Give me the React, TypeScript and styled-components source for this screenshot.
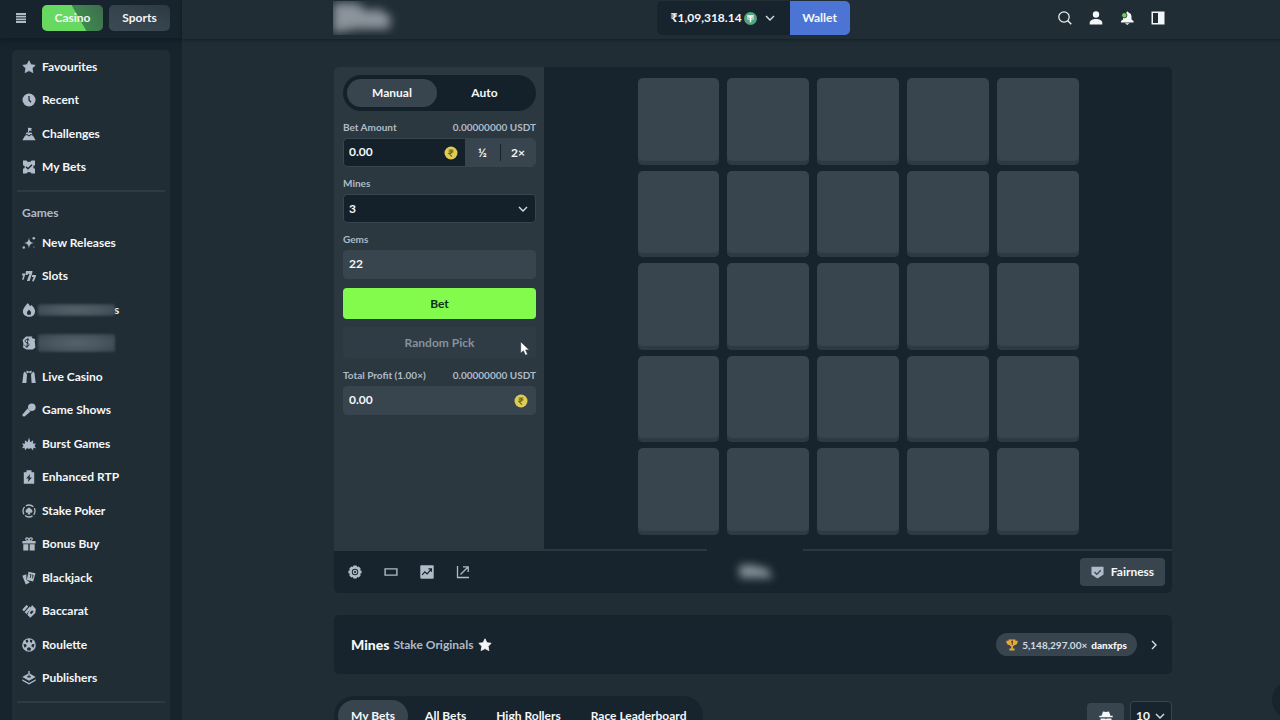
import React from 'react';
import styled, { createGlobalStyle, css } from 'styled-components';

const color = {
  page: '#202d35',
  deep: '#17242d',
  field: '#14212a',
  panel: '#2b3840',
  raised: '#38454f',
  muted: '#afbbc8',
  text: '#f4f7f9',
  green: '#82fb4c',
  blue: '#4c74d4',
};

const Global = createGlobalStyle`
  *, *::before, *::after { box-sizing: border-box; }
  body {
    margin: 0;
    background: ${color.page};
    color: ${color.text};
    font-family: Lato, "Noto Sans", sans-serif;
    font-size: 12px;
    line-height: 16px;
    font-weight: 700;
  }
  button, input, select { font: inherit; color: inherit; border: 0; margin: 0; padding: 0; background: none; }
  button { cursor: pointer; }
  a { color: inherit; text-decoration: none; }
  svg { display: block; flex: none; }
`;

const Shell = styled.div`
  display: flex;
  height: 100vh;
  overflow: hidden;
`;

/* ---------- sidebar ---------- */

const Sidebar = styled.aside`
  display: flex;
  flex-direction: column;
  flex: none;
  width: 182px;
  background: ${color.deep};
`;

const SideHeader = styled.div`
  display: flex;
  align-items: center;
  flex: none;
  gap: 6px;
  height: 38px;
  padding: 0 12px 3px 14px;
  box-shadow: 0 2px 6px rgba(8, 18, 25, 0.5);
`;

const MenuButton = styled.button`
  display: grid;
  place-items: center;
  width: 14px;
  height: 24px;
  margin-right: 8px;
  color: ${color.muted};
`;

const ModeLink = styled.a<{ $active?: boolean }>`
  flex: 1;
  height: 26px;
  border-radius: 5px;
  line-height: 25px;
  text-align: center;
  background: ${(p) =>
    p.$active
      ? 'linear-gradient(60deg, #67d860 0 58%, #3d8a4d 59%, #3f6b4f 100%)'
      : 'linear-gradient(20deg, #3c4a55 0%, #34424c 60%, #2c3942 100%)'};
`;

const SidePanel = styled.nav`
  flex: 1;
  margin: 12px 12px 0;
  overflow: hidden;
  border-radius: 5px 5px 0 0;
  background: ${color.page};
`;

const NavList = styled.ul<{ $height: number }>`
  display: grid;
  grid-auto-rows: 1fr;
  height: ${(p) => p.$height}px;
  margin: 0;
  padding: 0 10px;
  list-style: none;
`;

const NavLink = styled.a`
  display: flex;
  align-items: center;
  gap: 6px;
  height: 100%;
  svg { color: ${color.muted}; }
`;

const SideRule = styled.hr`
  height: 2px;
  margin: 6px 5px 13px;
  border: 0;
  background: #2d3b44;
`;

const SideHeading = styled.h2`
  margin: 0 10px 5px;
  font-size: 12px;
  line-height: 16px;
  color: ${color.muted};
`;

const Redacted = styled.span<{ $tall?: boolean }>`
  display: block;
  width: 77px;
  height: ${(p) => (p.$tall ? 18 : 12)}px;
  margin-left: -4px;
  border-radius: 2px;
  background: radial-gradient(ellipse at 50% 50%, #56616a 0%, #4a565f 50%, #35424b 100%);
  filter: blur(1px);
  & + span { margin-left: -7px; }
`;

/* ---------- top bar ---------- */

const Main = styled.main`
  display: flex;
  flex: 1;
  flex-direction: column;
  min-width: 0;
  background: ${color.page};
`;

const TopBar = styled.header`
  display: grid;
  grid-template-columns: 1fr auto 1fr;
  align-items: center;
  flex: none;
  height: 39px;
  padding: 0 107px 3px 151px;
  box-shadow: 0 1px 3px rgba(8, 18, 25, 0.55);
`;

const BlurredLogo = styled.div`
  width: 68px;
  height: 34px;
  overflow: hidden;
  svg { filter: blur(5px); }
`;

const Balance = styled.div`
  display: flex;
  height: 34px;
  border-radius: 5px;
  overflow: hidden;
  background: ${color.deep};
`;

const BalanceButton = styled.button`
  display: flex;
  align-items: center;
  justify-content: space-between;
  width: 133px;
  padding: 0 15px 0 14px;
`;

const Amount = styled.span`
  display: flex;
  align-items: center;
  gap: 2px;
`;

const WalletButton = styled.button`
  width: 60px;
  background: ${color.blue};
`;

const TopActions = styled.div`
  display: flex;
  justify-content: flex-end;
  gap: 15px;
  padding-right: 7px;
`;

const IconButton = styled.button`
  display: grid;
  place-items: center;
  width: 16px;
  height: 24px;
`;

/* ---------- game card ---------- */

const Content = styled.div`
  display: flex;
  flex: 1;
  flex-direction: column;
  gap: 22px;
  min-height: 0;
  padding: 28px 108px 0 152px;
  overflow-y: auto;
  scrollbar-width: none;
`;

const Game = styled.section`
  flex: none;
  overflow: hidden;
  border-radius: 5px;
  background: ${color.deep};
`;

const GameBody = styled.div`
  display: grid;
  grid-template-columns: 210px 1fr;
`;

const Controls = styled.form`
  display: flex;
  flex-direction: column;
  gap: 8px;
  padding: 8px 8px 0 9px;
  background: ${color.panel};
`;

const ModeTabs = styled.div`
  display: grid;
  grid-template-columns: 90px 1fr;
  height: 36px;
  padding: 4px;
  border-radius: 18px;
  background: ${color.field};
`;

const PillTab = styled.button<{ $active?: boolean; $padded?: boolean }>`
  border-radius: 16px;
  background: ${(p) => (p.$active ? color.raised : 'transparent')};
  ${(p) => p.$padded && css`padding: 0 13px; white-space: nowrap;`}
`;

const Field = styled.div`
  display: flex;
  flex-direction: column;
  gap: 3px;
`;

const LabelRow = styled.div`
  display: flex;
  justify-content: space-between;
  font-size: 10px;
  line-height: 16px;
  color: ${color.muted};
  white-space: nowrap;
`;

const InputBox = styled.div<{ $plain?: boolean }>`
  position: relative;
  display: flex;
  height: 29px;
  overflow: hidden;
  border: 1px solid ${color.raised};
  border-radius: 4px;
  background: ${(p) => (p.$plain ? color.raised : color.field)};
`;

const TextInput = styled.input`
  flex: 1;
  min-width: 0;
  padding: 0 5px 1px;
  outline: none;
`;

const CoinSlot = styled.span`
  display: grid;
  place-items: center;
  width: 28px;
`;

const Multipliers = styled.div`
  display: grid;
  grid-template-columns: 1fr 1fr;
  width: 70px;
  padding: 5px 0;
  background: ${color.raised};
  button + button { border-left: 1px solid ${color.deep}; }
`;

const SelectInput = styled.select`
  flex: 1;
  padding: 0 5px;
  appearance: none;
  outline: none;
`;

const SelectArrow = styled.span<{ $right: number }>`
  position: absolute;
  top: 50%;
  right: ${(p) => p.$right}px;
  transform: translateY(-50%);
  pointer-events: none;
`;

const Actions = styled.div`
  display: flex;
  flex-direction: column;
  gap: 8px;
  margin: 1px 0;
`;

const BetButton = styled.button`
  height: 31px;
  border-radius: 4px;
  background: ${color.green};
  color: #10301c;
`;

const RandomButton = styled.button`
  position: relative;
  height: 31px;
  border-radius: 4px;
  background: #2f3c45;
  color: #86929c;
`;

const Pointer = styled.span`
  position: absolute;
  top: 14px;
  right: 6px;
`;

const Board = styled.div`
  display: grid;
  grid-template-columns: repeat(5, 1fr);
  gap: 6px 8px;
  width: 441px;
  height: 457px;
  margin: 11px auto 14px;
`;

const Tile = styled.button`
  border-radius: 5px;
  background: ${color.raised};
  box-shadow: inset 0 -5px 1px -1px #2d3a43;
`;

const GameRule = styled.div`
  height: 2px;
  background: linear-gradient(
    90deg,
    ${color.panel} calc(50% - 46px),
    transparent calc(50% - 46px) calc(50% + 50px),
    ${color.panel} calc(50% + 50px)
  );
`;

const GameFooter = styled.footer`
  display: grid;
  grid-template-columns: 1fr auto 1fr;
  align-items: center;
  height: 42px;
  padding: 0 7px 0 13px;
`;

const BlurredMark = styled.svg`
  filter: blur(4px);
`;

const Tools = styled.div`
  display: flex;
  gap: 20px;
  color: ${color.muted};
`;

const FairnessButton = styled.button`
  display: flex;
  align-items: center;
  justify-content: center;
  justify-self: end;
  gap: 7px;
  width: 85px;
  height: 28px;
  border-radius: 4px;
  background: ${color.raised};
`;

/* ---------- title card and bets ---------- */

const TitleCard = styled.section`
  display: flex;
  align-items: center;
  justify-content: space-between;
  flex: none;
  height: 59px;
  padding: 0 10px 0 17px;
  border-radius: 5px;
  background: ${color.deep};
`;

const TitleGroup = styled.div`
  display: flex;
  align-items: center;
  gap: 4px;
`;

const Title = styled.h1`
  margin: 0;
  font-size: 14px;
  line-height: 20px;
  font-weight: 900;
`;

const Studio = styled.a`
  color: ${color.muted};
`;

const RecordGroup = styled.div`
  display: flex;
  align-items: center;
  gap: 9px;
`;

const Record = styled.button`
  display: flex;
  align-items: center;
  justify-content: center;
  gap: 4px;
  width: 141px;
  height: 23px;
  border-radius: 12px;
  background: ${color.raised};
  font-size: 10px;
  color: #d3dbe2;
  strong { font-weight: 900; color: ${color.text}; }
`;

const BetsBar = styled.section`
  display: flex;
  justify-content: space-between;
  flex: none;
`;

const BetTabs = styled.div`
  display: flex;
  gap: 4px;
  height: 40px;
  padding: 4px;
  border-radius: 20px;
  background: ${color.deep};
`;

const BetTools = styled.div`
  display: flex;
  align-items: flex-start;
  gap: 6px;
  padding-top: 5px;
`;

const GhostButton = styled.button`
  display: grid;
  place-items: center;
  width: 37px;
  height: 28px;
  margin-top: 2px;
  border-radius: 4px;
  background: ${color.raised};
`;

const PageSize = styled(InputBox)`
  width: 42px;
  height: 29px;
  background: ${color.deep};
`;

const ChatBubble = styled.button`
  position: fixed;
  right: -32px;
  bottom: 0;
  width: 40px;
  height: 40px;
  border-radius: 50%;
  background: ${color.deep};
`;

/* ---------- drawings ---------- */

const Svg = ({ size = 14, box = 14, children }: { size?: number; box?: number; children: React.ReactNode }) => (
  <svg width={size} height={size} viewBox={`0 0 ${box} ${box}`} fill="currentColor" aria-hidden="true">
    {children}
  </svg>
);

const starPath = 'M7 .8l1.900 3.900 4.300.6-3.100 3 .8 4.300L7 10.600l-3.900 2 .8-4.300-3.100-3 4.300-.6z';
const hole = color.page;

const icons: Record<string, React.ReactNode> = {
  star: <path d={starPath} stroke="currentColor" strokeWidth="0.8" strokeLinejoin="round" />,
  clock: (
    <>
      <circle cx="7" cy="7" r="6.500" />
      <path d="M7 3v4l2 2.200" fill="none" stroke={hole} strokeWidth="1.300" />
    </>
  ),
  summit: (
    <>
      <path d="M6 .8h1l3 .4-1 1.300 1 1.300H7v1.400H6z" />
      <path d="M4.500 5.500h5l1 2.200-1.700-.6L7 8.300l-1.800-1.200-1.700.6z" />
      <path d="M3 8.700l2-.6 2 1.400 2-1.400 2 .6 2.600 4.500H.4z" />
    </>
  ),
  ticket: (
    <>
      <path d="M1 .5h3.500a2.500 1.500 0 005 0H13v4.700a1.800 1.800 0 000 3.600v4.700H9.500a2.500 1.500 0 00-5 0H1V8.800a1.800 1.800 0 000-3.600z" />
      <path d="M4 6.800l2 2 4-4" fill="none" stroke={hole} strokeWidth="1.400" />
    </>
  ),
  sparkle: (
    <>
      <path d="M7 1.500c.5 3.800 1.500 5 5 5.500-3.500.5-4.500 1.700-5 5.500C6.500 8.700 5.500 7.500 2 7c3.500-.5 4.500-1.700 5-5.500z" />
      <circle cx="11.800" cy="2.300" r="1.300" />
      <circle cx="1.800" cy="11.500" r="1.200" />
      <circle cx="12" cy="11" r=".6" />
    </>
  ),
  slots: (
    <>
      <path d="M4 2h6.500l-.3 2.200L7.600 12H4.900l2.600-7.300H6L5.500 6H3.400z" />
      <path d="M0 4.500h3.300l-.4 2-1.300 4.200H0l1.300-4.200H.2zM10.200 6H14l-.3 2-1.900 4.200H10L11.600 8h-1.700z" />
    </>
  ),
  flame: (
    <>
      <path d="M5.500.3c1.300.8 2 1.600 2.500 2.900l1.500-1.100c2 1.900 3.600 4.100 3.600 6.500A5.500 5.500 0 017.300 13.800C3.500 13.800.9 11.500.9 8.300c0-3 2.500-5 4.600-8z" />
      <path d="M7 6.800c1.200 1 2.100 2 2.100 3.100A2 2 0 017 12a2 2 0 01-2.100-2.100C4.900 8.800 6 7.900 7 6.800z" fill={hole} />
    </>
  ),
  stakeChip: (
    <>
      <path d="M4 .6h6.500l-1 1.400 3.700 1-.5 2 .7 6.500-2.600 2H4.500L1 11.500 1.500 8 .6 4z" />
      <path d="M7.300 4.300C6.500 3 3 3 3 5c0 2.200 4 1.500 4 3.800 0 2-3.600 2.200-4.600.4M6 1.800L4.900 12" fill="none" stroke={hole} strokeWidth=".9" />
    </>
  ),
  tuxedo: (
    <>
      <path d="M2.800 1.500L5 4.500 4.400 13H.3L1.500 3zM11.200 1.500L9 4.500l.6 8.500h4.100L12.500 3z" />
      <path d="M4.500.4L7 1.500 9.500.4v3L7 2.500l-2.500.9z" />
    </>
  ),
  microphone: (
    <>
      <circle cx="9.800" cy="4.200" r="3.800" />
      <path d="M5.500 5.500l3 3-5.900 4.900-2-.1-.1-1.900z" />
    </>
  ),
  burst: (
    <path d="M7 .5l1.400 4.800 2.700-2v3.500l2.900-.4-1.500 2.400L14 11.200l-2.500-.4-.6 2.500-2-2.300L7 12l-1.900-1-2 2.300-.6-2.500-2.500.4 1.500-2.400L0 6.400l2.900.4V3.300l2.700 2z" />
  ),
  battery: (
    <>
      <path d="M4.500.3h5v1.900h2.700v11.500H1.800V2.200h2.700z" />
      <path d="M8 4L4.200 8.500h2.300L6 12l3.900-4.600H7.500z" fill={hole} />
    </>
  ),
  pokerChip: (
    <>
      <circle cx="7" cy="7" r="6" fill="none" stroke="currentColor" strokeWidth="1.300" strokeDasharray="7.900 1.525" strokeDashoffset="3.950" />
      <path d="M7 3.200c1 1.300 3.500 2.200 3.500 4 0 1.600-1.800 2-2.700 1.200l.6 2.200H5.600l.6-2.200c-.9.800-2.700.4-2.700-1.200 0-1.800 2.500-2.700 3.500-4z" />
    </>
  ),
  gift: (
    <>
      <path d="M.4 4h13.200v2.500H.4zM1.300 7.300h5v6.200h-5zM7.700 7.300h5v6.200h-5z" />
      <path d="M7 4C3 4 3 .8 5 .8c1.300 0 2 1.700 2 3.200C7 2.500 7.700.8 9 .8c2 0 2 3.200-2 3.200z" fill="none" stroke="currentColor" strokeWidth="1.200" />
    </>
  ),
  cards: (
    <>
      <path d="M.3 4.800l4-1.500.2 5.500 3.300 2.700-4 2z" />
      <path d="M6.500.8l7 1.500-2.400 8.300-6.300-1.500z" />
      <path d="M7.600 3.400L9 3.700l-.8 3.200M10 4l1.200.3-.9 3" fill="none" stroke={hole} strokeWidth=".9" />
    </>
  ),
  baccarat: (
    <>
      <path d="M.3 5.500L4.500.9l1.800 1.500L1.900 7.500zM2.700 8.300l5-5.800 1.700 1.400-5 6z" />
      <path d="M10 1l3.800 4-.5 4-5 4.700-3-2.900z" />
      <path d="M7.800 8.800l2.200-2.500 1.500 1.500-2.300 2.400z" fill={hole} />
    </>
  ),
  roulette: (
    <>
      <circle cx="7" cy="7" r="6.800" />
      <g fill={hole}>
        <path d="M3.500 2.200l2.300-.7.600 2.200-1.800 1.200zM10.500 2.200l-2.300-.7-.3 2.200 1.700 1.300z" />
        <path d="M1.500 6l2.600.3.600 2L2.400 9.800zM12.500 6l-2.600.3-.6 2 2.300 1.500z" />
        <path d="M7 9.300l1.900.8-.2 2.400H5.300l-.2-2.400z" />
      </g>
    </>
  ),
  publisher: (
    <>
      <path d="M6.300 0h1.400v2.500l6 3.500L7 9.800.3 6l6-3.500z" />
      <path d="M.3 8.200L7 12l6.700-3.800v1.600L7 13.600.3 9.800z" />
      <path d="M7 3.500v3.200M5 5.800h4" fill="none" stroke={hole} strokeWidth="1" />
    </>
  ),
};

const Chevron = ({ dir = 'down' }: { dir?: 'down' | 'right' }) => (
  <Svg size={10} box={10}>
    <path
      d={dir === 'down' ? 'M1 3l4 4 4-4' : 'M3 1l4 4-4 4'}
      fill="none"
      stroke="#d6dee5"
      strokeWidth="1.400"
    />
  </Svg>
);

const RupeeCoin = () => (
  <Svg size={14}>
    <circle cx="7" cy="7" r="6.500" fill="#e0cc55" />
    <path d="M4.600 4h4.800M4.600 5.900h4.800M5 4c3.900 0 3.900 3.600 0 3.600l3 3" fill="none" stroke="#626d1c" strokeWidth="1.100" />
  </Svg>
);

const TetherCoin = () => (
  <Svg size={13}>
    <circle cx="7" cy="7" r="7" fill="#55a381" />
    <path d="M3.500 4.300h7M7 4v7" fill="none" stroke="#fff" strokeWidth="1.600" />
    <ellipse cx="7" cy="6.900" rx="3.800" ry="1" fill="none" stroke="#fff" strokeWidth=".8" />
  </Svg>
);

/* ---------- data ---------- */

const personal = [
  ['star', 'Favourites'],
  ['clock', 'Recent'],
  ['summit', 'Challenges'],
  ['ticket', 'My Bets'],
];

const games: [string, React.ReactNode][] = [
  ['sparkle', 'New Releases'],
  ['slots', 'Slots'],
  ['flame', <><Redacted /><span>s</span></>],
  ['stakeChip', <Redacted $tall />],
  ['tuxedo', 'Live Casino'],
  ['microphone', 'Game Shows'],
  ['burst', 'Burst Games'],
  ['battery', 'Enhanced RTP'],
  ['pokerChip', 'Stake Poker'],
  ['gift', 'Bonus Buy'],
  ['cards', 'Blackjack'],
  ['baccarat', 'Baccarat'],
  ['roulette', 'Roulette'],
  ['publisher', 'Publishers'],
];

const NavItem = ({ icon, children }: { icon: string; children: React.ReactNode }) => (
  <li>
    <NavLink href="#">
      <Svg>{icons[icon]}</Svg>
      {children}
    </NavLink>
  </li>
);

export default function App() {
  return (
    <>
      <Global />
      <Shell>
        <Sidebar>
          <SideHeader>
            <MenuButton aria-label="Menu">
              <Svg size={12} box={12}>
                <path d="M1 1h10v1.900H1zM1 3.700h10v1.900H1zM1 6.400h10v1.900H1zM1 9.100h10V11H1z" />
              </Svg>
            </MenuButton>
            <ModeLink href="#" $active>Casino</ModeLink>
            <ModeLink href="#">Sports</ModeLink>
          </SideHeader>
          <SidePanel>
            <NavList $height={134}>
              {personal.map(([icon, label]) => <NavItem key={icon} icon={icon}>{label}</NavItem>)}
            </NavList>
            <SideRule />
            <SideHeading>Games</SideHeading>
            <NavList $height={469}>
              {games.map(([icon, label]) => <NavItem key={icon} icon={icon}>{label}</NavItem>)}
            </NavList>
            <SideRule />
          </SidePanel>
        </Sidebar>

        <Main>
          <TopBar>
            <BlurredLogo>
              <svg width="68" height="34" viewBox="0 0 68 34" aria-hidden="true">
                <path d="M0 2h24l10 8 12-2 12 8-2 12H36l-12 0-24 4z" fill="#8b939b" />
              </svg>
            </BlurredLogo>
            <Balance>
              <BalanceButton>
                <Amount>₹1,09,318.14 <TetherCoin /></Amount>
                <Chevron />
              </BalanceButton>
              <WalletButton>Wallet</WalletButton>
            </Balance>
            <TopActions>
              <IconButton aria-label="Search">
                <Svg>
                  <circle cx="6" cy="6" r="5.200" fill="none" stroke="currentColor" strokeWidth="1.200" />
                  <path d="M9.800 9.800l3.500 3.500" stroke="currentColor" strokeWidth="1.300" />
                </Svg>
              </IconButton>
              <IconButton aria-label="Account">
                <Svg>
                  <circle cx="7" cy="3.500" r="3.200" />
                  <path d="M.7 13.500v-1.500c0-5.300 12.600-5.300 12.600 0v1.500z" />
                </Svg>
              </IconButton>
              <IconButton aria-label="Notifications">
                <Svg>
                  <path d="M7.500.3l1 1.200c2 .6 3 2.200 3 4.500v2.500l2 1.500v1.500H1V10l2-1.500V6c0-2.300 1.500-3.900 3.500-4.500zM5 12.300h4.500L7.200 14z" />
                  <circle cx="4.300" cy="4.300" r="2.600" fill="#69d84b" stroke={color.page} strokeWidth=".8" />
                </Svg>
              </IconButton>
              <IconButton aria-label="Side panel">
                <Svg>
                  <path d="M.5.5h13v13H.5zM2 2v10h5V2z" fillRule="evenodd" />
                </Svg>
              </IconButton>
            </TopActions>
          </TopBar>

          <Content>
            <Game>
              <GameBody>
                <Controls onSubmit={(e) => e.preventDefault()}>
                  <ModeTabs>
                    <PillTab type="button" $active>Manual</PillTab>
                    <PillTab type="button">Auto</PillTab>
                  </ModeTabs>
                  <Field>
                    <LabelRow><label htmlFor="bet">Bet Amount</label><span>0.00000000 USDT</span></LabelRow>
                    <InputBox>
                      <TextInput id="bet" defaultValue="0.00" />
                      <CoinSlot><RupeeCoin /></CoinSlot>
                      <Multipliers>
                        <button type="button">½</button>
                        <button type="button">2×</button>
                      </Multipliers>
                    </InputBox>
                  </Field>
                  <Field>
                    <LabelRow><label htmlFor="mines">Mines</label></LabelRow>
                    <InputBox>
                      <SelectInput id="mines" defaultValue="3">
                        <option>3</option>
                        <option>5</option>
                      </SelectInput>
                      <SelectArrow $right={7}><Chevron /></SelectArrow>
                    </InputBox>
                  </Field>
                  <Field>
                    <LabelRow><label htmlFor="gems">Gems</label></LabelRow>
                    <InputBox $plain><TextInput id="gems" value="22" readOnly /></InputBox>
                  </Field>
                  <Actions>
                    <BetButton type="submit">Bet</BetButton>
                    <RandomButton type="button" disabled>
                      Random Pick
                      <Pointer>
                        <svg width="10" height="15" viewBox="0 0 10 15" aria-hidden="true">
                          <path d="M.7.700v11.600l2.700-2.500 2 4.500 2.200-1-2-4.400h3.700z" fill="#fff" stroke="#27323a" strokeWidth=".6" />
                        </svg>
                      </Pointer>
                    </RandomButton>
                  </Actions>
                  <Field>
                    <LabelRow><label htmlFor="profit">Total Profit (1.00×)</label><span>0.00000000 USDT</span></LabelRow>
                    <InputBox $plain>
                      <TextInput id="profit" value="0.00" readOnly />
                      <CoinSlot><RupeeCoin /></CoinSlot>
                    </InputBox>
                  </Field>
                </Controls>
                <Board>
                  {Array.from({ length: 25 }, (_, i) => <Tile key={i} aria-label={`Tile ${i + 1}`} />)}
                </Board>
              </GameBody>
              <GameRule />
              <GameFooter>
                <Tools>
                  <IconButton aria-label="Settings">
                    <Svg>
                      <path fillRule="evenodd" d="M5.300.5h3.400l.4 1.500 1.600-.5 2 2-.6 1.700 1.500.5v2.600l-1.500.5.6 1.700-2 2-1.600-.5-.4 1.500H5.300L4.900 12l-1.600.5-2-2 .6-1.700-1.500-.5V5.700l1.500-.5-.6-1.700 2-2 1.600.5zM7 3.800a3.200 3.200 0 100 6.400 3.200 3.200 0 000-6.400z" />
                      <circle cx="7" cy="7" r="1.700" fill="none" stroke="currentColor" strokeWidth="1.200" />
                    </Svg>
                  </IconButton>
                  <IconButton aria-label="Theatre mode">
                    <Svg><path d="M.4 3.200h13.200v7.600H.4zM1.800 4.600v4.800h10.400V4.600z" fillRule="evenodd" /></Svg>
                  </IconButton>
                  <IconButton aria-label="Live stats">
                    <Svg>
                      <rect x=".3" y=".3" width="13.400" height="13.400" rx="1" />
                      <path d="M2.200 9.800l2.600-3 2.300 2.100 4-4.600M8.400 3.800h3v3" fill="none" stroke={color.deep} strokeWidth="1.200" />
                    </Svg>
                  </IconButton>
                  <IconButton aria-label="Open in window">
                    <Svg><path d="M1.500 1v11.500H13M4.500 9.500l7.300-7.300M7 1.800h5.200V7" fill="none" stroke="currentColor" strokeWidth="1.300" /></Svg>
                  </IconButton>
                </Tools>
                <BlurredMark width="46" height="24" viewBox="0 0 46 24" aria-hidden="true">
                  <path d="M6 5h16l4 2 8 1 6 10H7z" fill="#848e96" />
                </BlurredMark>
                <FairnessButton>
                  <Svg size={13}>
                    <path d="M.5.800h13v8.400L7 13.500.5 9.200z" fill={color.muted} />
                    <path d="M3.800 6.500L6.200 9l4.300-4.500" fill="none" stroke={color.raised} strokeWidth="1.400" />
                  </Svg>
                  Fairness
                </FairnessButton>
              </GameFooter>
            </Game>

            <TitleCard>
              <TitleGroup>
                <Title>Mines</Title>
                <Studio href="#">Stake Originals</Studio>
                <IconButton aria-label="Favourite"><Svg>{icons.star}</Svg></IconButton>
              </TitleGroup>
              <RecordGroup>
                <Record>
                  <Svg size={12}>
                    <path d="M3 .7h8v1.200h2.700c0 3-1.200 4.700-3.500 5.100L8 8.800V11h2v2.500H4V11h2V8.800L3.800 7C1.500 6.600.3 4.900.3 1.900H3z" fill="#e5a83b" />
                    <path d="M6 3.300l1.300-.7v4" fill="none" stroke="#4b3a1c" strokeWidth="1.300" />
                  </Svg>
                  <span>5,148,297.00×</span> <strong>danxfps</strong>
                </Record>
                <IconButton aria-label="Details"><Chevron dir="right" /></IconButton>
              </RecordGroup>
            </TitleCard>

            <BetsBar>
              <BetTabs>
                <PillTab $padded $active>My Bets</PillTab>
                <PillTab $padded>All Bets</PillTab>
                <PillTab $padded>High Rollers</PillTab>
                <PillTab $padded>Race Leaderboard</PillTab>
              </BetTabs>
              <BetTools>
                <GhostButton aria-label="Ghost mode">
                  <Svg>
                    <path d="M4 1.500l3 .6 3-.6 1.400 4.300h2.300v1.400H.3V5.800h2.300zM1.500 8.500h4.700l.8.700.8-.7h4.700V11l-1.300 1.500H9L7.500 10.700h-1L5 12.500H2.800L1.500 11z" />
                  </Svg>
                </GhostButton>
                <PageSize>
                  <SelectInput aria-label="Rows" defaultValue="10">
                    <option>10</option>
                    <option>20</option>
                  </SelectInput>
                  <SelectArrow $right={6}><Chevron /></SelectArrow>
                </PageSize>
              </BetTools>
            </BetsBar>
          </Content>
        </Main>
        <ChatBubble aria-label="Support" />
      </Shell>
    </>
  );
}
